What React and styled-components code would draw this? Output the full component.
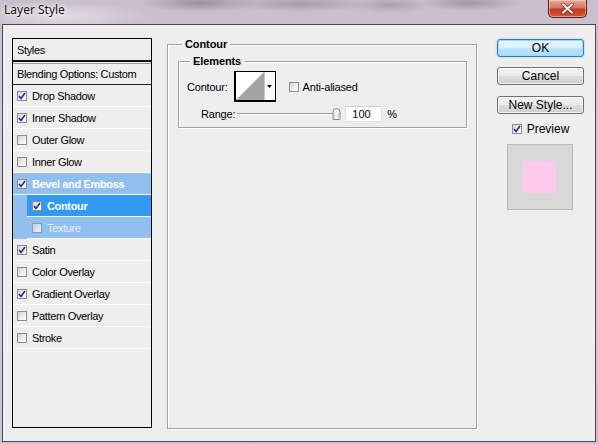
import React from 'react';
import styled, { createGlobalStyle } from 'styled-components';

const Global = createGlobalStyle`
  html, body { margin: 0; padding: 0; width: 598px; height: 444px; overflow: hidden; }
  body { font-family: "Liberation Sans", Arial, sans-serif; font-size: 11px; color: #000; }
  * { box-sizing: border-box; }
`;

const Frame = styled.div`
  width: 598px;
  height: 444px;
  display: flex;
  flex-direction: column;
  padding: 0 2px 2px 2px;
  background:
    radial-gradient(ellipse 60px 9px at 200px 3px, rgba(95, 85, 105, 0.45), transparent),
    radial-gradient(ellipse 70px 8px at 300px 4px, rgba(95, 85, 105, 0.35), transparent),
    radial-gradient(ellipse 50px 8px at 470px 3px, rgba(95, 85, 105, 0.4), transparent),
    radial-gradient(ellipse 40px 8px at 390px 5px, rgba(95, 85, 105, 0.3), transparent),
    radial-gradient(ellipse 90px 14px at 60px 16px, rgba(255, 255, 255, 0.45), transparent),
    linear-gradient(180deg, #c9bfcc 0%, #d4cbd6 45%, #cbc2cf 100%);
`;

const TitleBar = styled.div`
  height: 24px;
  flex: none;
  display: flex;
  align-items: flex-start;
  justify-content: space-between;
`;

const Title = styled.div`
  font-family: "Noto Sans", "Liberation Sans", sans-serif;
  font-size: 12px;
  line-height: 20px;
  padding-left: 2px;
  color: #111;
  text-shadow: 0 0 6px #fff, 0 0 3px #fff;
`;

const CloseBtn = styled.div`
  width: 39px;
  height: 18px;
  margin-right: 9px;
  border: 1px solid #5b2019;
  border-top: none;
  border-radius: 0 0 5px 5px;
  background: linear-gradient(180deg, #e9a89a 0%, #d9735f 45%, #c2391f 55%, #d2583a 100%);
  box-shadow: inset 0 0 0 1px rgba(255, 220, 210, 0.5);
  display: flex;
  align-items: center;
  justify-content: center;
`;

const Body = styled.div`
  flex: 1;
  display: flex;
  align-items: flex-start;
  border: 1px solid #4a4856;
  background: #eeeeee;
  padding: 13px 0 0 9px;
`;

/* ---------- Left list ---------- */

const StylesPanel = styled.div`
  width: 140px;
  height: 390px;
  flex: none;
  border: 1px solid #000;
  background: #eeeeee;
  display: flex;
  flex-direction: column;
`;

const PanelHeader = styled.div`
  height: 23px;
  padding-left: 4px;
  display: flex;
  align-items: center;
  border-bottom: 2px solid #111;
  margin-bottom: 1px;
  letter-spacing: -0.35px;
`;

const BlendRow = styled.div`
  height: 22px;
  padding-left: 4px;
  display: flex;
  align-items: center;
  border-top: 1px solid #9a9a9a;
  border-bottom: 1px solid #222;
  letter-spacing: -0.35px;
`;

const Row = styled.div`
  height: 22px;
  display: flex;
  align-items: center;
  gap: 5px;
  padding-left: ${p => (p.$sub ? 5 : 4)}px;
  margin-left: ${p => (p.$sub ? 14 : 0)}px;
  border-bottom: 1px solid #ffffff;
  letter-spacing: -0.35px;
  background: ${p => (p.$active ? '#3399f3' : p.$group ? '#91bff0' : 'transparent')};
  color: ${p => (p.$active || p.$group ? '#fff' : p.$faded ? '#e4eefb' : '#000')};
  font-weight: ${p => (p.$bold ? 'bold' : 'normal')};
`;

const SubGroup = styled.div`
  background: #91bff0;
`;

const BoxWrap = styled.span`
  width: 10px;
  height: 10px;
  flex: none;
  display: inline-flex;
  border: 1px solid #8a8c90;
  background: linear-gradient(135deg, #d2d3d6 0%, #f1f1f2 60%, #ffffff 100%);
  opacity: ${p => (p.$faded ? 0.75 : 1)};
`;

function Check({ on, faded }) {
  return (
    <BoxWrap $faded={faded}>
      {on && (
        <svg width="8" height="8" viewBox="0 0 8 8">
          <path d="M1 4 L3 6.5 L7 1" fill="none" stroke="#1d2f8c" strokeWidth="1.6" />
        </svg>
      )}
    </BoxWrap>
  );
}

/* ---------- Middle groups ---------- */

const Group = styled.fieldset`
  margin: 0;
  min-width: 0;
  border: 1px solid #a2a2a2;
  box-shadow: inset 1px 1px 0 #ffffff, 1px 1px 0 #ffffff;
`;

const MainGroup = styled(Group)`
  width: 310px;
  height: 392px;
  margin: -1px 0 0 15px;
  padding: 0 9px 0 10px;
`;

const ElementsGroup = styled(Group)`
  margin-top: 3px;
  padding: 3px 9px 5px 8px;
  display: flex;
  flex-direction: column;
  gap: 4px;
`;

const Legend = styled.legend`
  font-weight: bold;
  font-size: 11px;
  line-height: 14px;
  padding: 0 3px;
  margin-left: ${p => p.$ml}px;
  background: #eeeeee;
  letter-spacing: -0.1px;
`;

const FieldRow = styled.div`
  display: flex;
  align-items: center;
  height: ${p => p.$h}px;
`;

const Label = styled.span`
  letter-spacing: -0.2px;
  margin-left: ${p => p.$ml || 0}px;
`;

const ContourPicker = styled.div`
  width: 42px;
  height: 31px;
  margin-left: 6px;
  border: 1px solid #000;
  border-left-width: 2px;
  border-bottom-width: 2px;
  display: flex;
  background: #fff;
`;

const CurveArea = styled.div`
  width: 29px;
  height: 100%;
  border-right: 1px solid #c8c8c8;
  display: flex;
`;

const Arrow = styled.div`
  flex: 1;
  display: flex;
  align-items: center;
  justify-content: center;
  background: #fafafa;
`;

const CheckLabel = styled.label`
  display: flex;
  align-items: center;
  gap: 4px;
  margin-left: ${p => p.$ml || 0}px;
  letter-spacing: -0.2px;
`;

const SliderWrap = styled.div`
  width: 104px;
  height: 16px;
  margin-left: 2px;
  display: flex;
  align-items: center;
  position: relative;
`;

const Track = styled.div`
  width: 100%;
  height: 2px;
  border-top: 1px solid #9a9a9a;
  border-bottom: 1px solid #ffffff;
`;

const Thumb = styled.div`
  position: absolute;
  left: 95px;
  top: 2px;
  display: flex;
`;

const NumberInput = styled.div`
  width: 37px;
  height: 16px;
  margin-left: 4px;
  background: #fff;
  border: 1px solid #e2e2e2;
  border-top-color: #cfcfcf;
  display: flex;
  align-items: center;
  padding-left: 6px;
`;

/* ---------- Right column ---------- */

const RightCol = styled.div`
  width: 87px;
  margin: 1px 0 0 20px;
  display: flex;
  flex-direction: column;
  align-items: center;
`;

const Button = styled.div`
  width: 87px;
  height: 18px;
  margin-bottom: ${p => p.$mb}px;
  border: 1px solid ${p => (p.$primary ? '#3c7fb1' : '#707070')};
  border-radius: 3px;
  display: flex;
  align-items: center;
  justify-content: center;
  font-size: 12px;
  background: ${p =>
    p.$primary
      ? 'linear-gradient(180deg, #eaf6fd 0%, #d9f0fc 50%, #bee6fd 51%, #a7d9f5 100%)'
      : 'linear-gradient(180deg, #f2f2f2 0%, #ebebeb 50%, #dddddd 51%, #cfcfcf 100%)'};
  box-shadow: ${p =>
    p.$primary ? 'inset 0 0 0 1px #9ddcf8, 0 0 2px #7cc6ee' : 'inset 0 0 0 1px rgba(255,255,255,0.7)'};
`;

const PreviewLabel = styled.label`
  display: flex;
  align-items: center;
  gap: 5px;
  font-size: 12px;
  height: 14px;
  margin-top: -2px;
`;

const Thumbnail = styled.div`
  width: 66px;
  height: 66px;
  margin-top: 8px;
  margin-right: 2px;
  background: #d8d8d8;
  border: 1px solid #b8b8b8;
  display: flex;
  align-items: center;
  justify-content: center;
`;

const Swatch = styled.div`
  width: 33px;
  height: 32px;
  background: #ffc9ee;
`;

const items = [
  { name: 'Drop Shadow', on: true },
  { name: 'Inner Shadow', on: true },
  { name: 'Outer Glow', on: false },
  { name: 'Inner Glow', on: false },
];
const items2 = [
  { name: 'Satin', on: true },
  { name: 'Color Overlay', on: false },
  { name: 'Gradient Overlay', on: true },
  { name: 'Pattern Overlay', on: false },
  { name: 'Stroke', on: false },
];

export default function App() {
  return (
    <Frame>
      <Global />
      <TitleBar>
        <Title>Layer Style</Title>
        <CloseBtn>
          <svg width="13" height="11" viewBox="0 0 13 11">
            <path d="M2 1.5 L11 9.5 M11 1.5 L2 9.5" stroke="#5a1a10" strokeWidth="3.4" strokeLinecap="round" />
            <path d="M2 1.5 L11 9.5 M11 1.5 L2 9.5" stroke="#ffffff" strokeWidth="2.2" strokeLinecap="round" />
          </svg>
        </CloseBtn>
      </TitleBar>
      <Body>
        <StylesPanel>
          <PanelHeader>Styles</PanelHeader>
          <BlendRow>Blending Options: Custom</BlendRow>
          {items.map(i => (
            <Row key={i.name}>
              <Check on={i.on} />
              {i.name}
            </Row>
          ))}
          <Row $group $bold>
            <Check on />
            Bevel and Emboss
          </Row>
          <SubGroup>
            <Row $sub $active $bold>
              <Check on />
              Contour
            </Row>
            <Row $sub $faded>
              <Check faded />
              Texture
            </Row>
          </SubGroup>
          {items2.map(i => (
            <Row key={i.name}>
              <Check on={i.on} />
              {i.name}
            </Row>
          ))}
        </StylesPanel>

        <MainGroup>
          <Legend $ml={4}>Contour</Legend>
          <ElementsGroup>
            <Legend $ml={3}>Elements</Legend>
            <FieldRow $h={31}>
              <Label>Contour:</Label>
              <ContourPicker>
                <CurveArea>
                  <svg width="28" height="28" viewBox="0 0 28 28" preserveAspectRatio="none">
                    <polygon points="0,28 28,0 28,28" fill="#a3a3a3" />
                  </svg>
                </CurveArea>
                <Arrow>
                  <svg width="5" height="3" viewBox="0 0 5 3">
                    <polygon points="0,0 5,0 2.5,3" fill="#000" />
                  </svg>
                </Arrow>
              </ContourPicker>
              <CheckLabel $ml={13}>
                <Check />
                Anti-aliased
              </CheckLabel>
            </FieldRow>
            <FieldRow $h={16}>
              <Label $ml={14}>Range:</Label>
              <SliderWrap>
                <Track />
                <Thumb>
                  <svg width="9" height="12" viewBox="0 0 9 12">
                    <path d="M1 11.5 L1 4 Q1 0.5 4.5 0.5 Q8 0.5 8 4 L8 11.5 Z" fill="#f2f2f2" stroke="#8c8c8c" />
                    <path d="M2.5 5 L2.5 10 M6.5 5 L6.5 10" stroke="#d0d0d0" />
                  </svg>
                </Thumb>
              </SliderWrap>
              <NumberInput>100</NumberInput>
              <Label $ml={5}>%</Label>
            </FieldRow>
          </ElementsGroup>
        </MainGroup>

        <RightCol>
          <Button $primary $mb={10}>OK</Button>
          <Button $mb={11}>Cancel</Button>
          <Button $mb={10}>New Style...</Button>
          <PreviewLabel>
            <Check on />
            Preview
          </PreviewLabel>
          <Thumbnail>
            <Swatch />
          </Thumbnail>
        </RightCol>
      </Body>
    </Frame>
  );
}
